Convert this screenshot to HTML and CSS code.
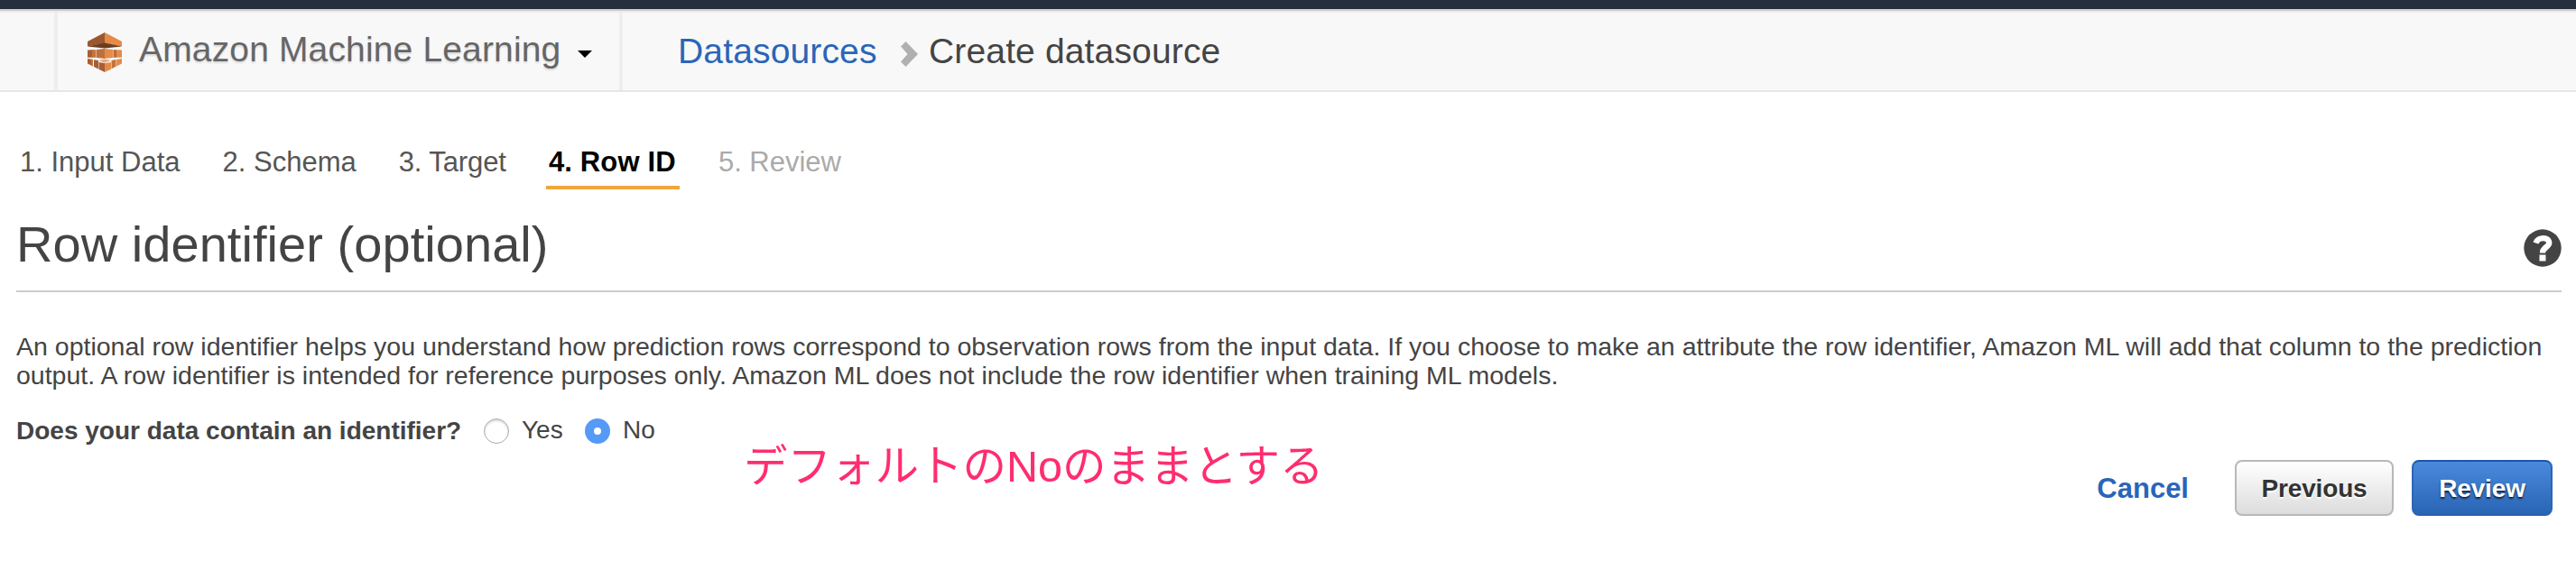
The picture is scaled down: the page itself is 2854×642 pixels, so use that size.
FILE: index.html
```html
<!DOCTYPE html>
<html lang="en">
<head>
<meta charset="utf-8">
<title>Create datasource</title>
<link rel="stylesheet" href="styles.css">
</head>
<body>
<div class="topbar"></div>
<header class="header">
  <div class="service">
    <svg class="logo" width="38" height="44" viewBox="0 0 38 44">
      <path fill="#9b5730" d="M0 10 19 0v12L0 15.500z"/>
      <path fill="#e58b4a" d="M38 10 19 0v12l19 3.500z"/>
      <path fill="#6b3d20" d="M0 15.500 19 11.500l19 4L19 17.500z"/>
      <path fill="#a55f34" d="M0 19.500l6-.3v8.600H0z"/>
      <path fill="#c4733f" d="M5 19.200h4.500v8.600H5z"/>
      <path fill="#c06f3c" d="M10 19l9-1v11l-9-1z"/>
      <path fill="#e58b4a" d="M19 18l9 1v9l-9 1zM32 19.200l6 .3v8.300h-6z"/>
      <path fill="#b56b3c" d="M28.500 19.200h3.500v8.600h-3.500z"/>
      <path fill="#a55f34" d="M0 29l6 1v7.500L0 34.500zM7 30.300l5 .7v9.500l-5-2.500zM12.500 33 19 34v10l-6.500-3.200z"/>
      <path fill="#e58b4a" d="M19 34l7-1v7.800L19 44zM32 30l6-1v5.500L32 37.500z"/>
      <path fill="#c4733f" d="M4 29.700l2 .3v7.500l-2-1zM26.500 31l5-1v7.700l-5 2.600z"/>
      <path fill="#e9a77a" d="M12 31l7-1.500 7 1.500-7 2.500z"/>
    </svg>
    <span class="service-name">Amazon Machine Learning</span>
    <span class="caret"></span>
  </div>
  <nav class="crumbs">
    <a class="crumb-link">Datasources</a>
    <svg class="chevron" width="20" height="28" viewBox="0 0 20 28"><path fill="#b0b0b0" d="M0 5.500 5.500 0 19 14 5.500 28 0 22.500 7.500 14z"/></svg>
    <span class="crumb-current">Create datasource</span>
  </nav>
</header>
<main class="page">
  <ol class="steps">
    <li class="step">1. Input Data</li>
    <li class="step">2. Schema</li>
    <li class="step step-target">3. Target</li>
    <li class="step step-active">4. Row ID</li>
    <li class="step step-disabled">5. Review</li>
  </ol>
  <div class="title-row">
    <h1 class="title">Row identifier (optional)</h1>
    <svg class="help" width="42" height="42" viewBox="0 0 42 42">
      <circle cx="21" cy="21" r="20.700" fill="#444"/>
      <path d="M13.500 15.500C16 8 28.500 8.500 28.200 15.700 28 20 21 20 21 26.500" fill="none" stroke="#fff" stroke-width="6.400"/>
      <path fill="#fff" d="M17.500 28.500h7v7h-7z"/>
    </svg>
  </div>
  <p class="intro">An optional row identifier helps you understand how prediction rows correspond to observation rows from the input data. If you choose to make an attribute the row identifier, Amazon ML will add that column to the prediction<br>output. A row identifier is intended for reference purposes only. Amazon ML does not include the row identifier when training ML models.</p>
  <div class="question">
    <span class="question-label">Does your data contain an identifier?</span>
    <span class="radio"></span><span class="option option-yes">Yes</span>
    <span class="radio radio-on"></span><span class="option">No</span>
  </div>
  <div class="actions">
    <a class="cancel">Cancel</a>
    <span class="button">Previous</span>
    <span class="button button-primary">Review</span>
  </div>
  <div class="note" lang="ja">デフォルトのNoのままとする</div>
</main>
</body>
</html>
```
FILE: styles.css
```css
* { box-sizing: border-box; }
body {
  margin: 0;
  background: #fff;
  color: #444;
  font-family: "Liberation Sans", Arial, sans-serif;
  height: 642px;
  overflow: hidden;
}
.topbar { height: 10px; background: #262f3e; }
.header {
  display: flex;
  height: 92px;
  padding-left: 60px;
  background: #f8f8f8;
  border-top: 2px solid #ccc;
  border-bottom: 2px solid #e6e6e6;
  box-shadow: inset 0 2px 0 #ececec;
  font-size: 39px;
  letter-spacing: .15px;
  white-space: nowrap;
}
.service {
  display: flex;
  width: 630px;
  margin-top: 2px;
  padding-left: 33px;
  border-left: 4px solid #eee;
  border-right: 4px solid #eee;
}
.logo { margin-top: 22px; flex: none; }
.service-name {
  width: 505px;
  padding-left: 19px;
  line-height: 81px;
  color: #666;
  text-shadow: 0 2px 2px rgba(0, 0, 0, .12);
}
.caret {
  margin-top: 42px;
  width: 0;
  height: 0;
  border: 8px solid transparent;
  border-top-color: #000;
  border-bottom: 0;
}
.crumbs { display: flex; padding-left: 61px; line-height: 89px; }
.crumb-link { width: 247px; color: #2a65b8; }
.chevron { margin-top: 34px; flex: none; }
.crumb-current { padding-left: 11px; }
.page { position: relative; padding: 59px 16px 0 18px; }
.steps {
  display: flex;
  margin: 0;
  padding: 1px 0 0 4px;
  list-style: none;
  font-size: 31px;
  line-height: 36px;
  color: #555;
  white-space: nowrap;
}
.step { margin-right: 47px; padding-bottom: 8px; border-bottom: 4px solid transparent; }
.step-target { margin-right: 44px; letter-spacing: -.1px; }
.step-active {
  margin-right: 43px;
  width: 148px;
  padding-left: 3px;
  font-weight: bold;
  letter-spacing: .15px;
  color: #000;
  border-bottom-color: #f0a63c;
}
.step-disabled { color: #aaa; }
.title-row {
  display: flex;
  justify-content: space-between;
  margin-top: 29px;
  padding-bottom: 19px;
  border-bottom: 2px solid #ccc;
}
.title { margin: 0; font-size: 56px; font-weight: normal; letter-spacing: .05px; line-height: 64px; }
.help { margin-top: 15px; }
.intro { margin: 44px 0 0; font-size: 28.500px; line-height: 32px; white-space: nowrap; }
.question { display: flex; align-items: center; height: 32px; margin-top: 30px; font-size: 28px; line-height: 32px; }
.question-label { width: 518px; font-weight: bold; white-space: nowrap; }
.radio {
  width: 28px;
  height: 28px;
  margin-right: 14px;
  border: 1px solid #aaa;
  border-radius: 50%;
  background: #fff;
  box-shadow: inset 0 2px 2px rgba(0, 0, 0, .15);
}
.radio-on { border: 10px solid #559af7; box-shadow: none; }
.option { margin-top: -3px; }
.option-yes { width: 70px; }
.actions {
  display: flex;
  justify-content: flex-end;
  margin-top: 16px;
  padding-right: 10px;
  font-weight: bold;
  line-height: 62px;
}
.cancel { margin-right: 51px; font-size: 31px; line-height: 64px; height: 62px; color: #2a65b8; }
.button {
  width: 176px;
  height: 62px;
  border: 2px solid #b8b8b8;
  border-radius: 8px;
  background: linear-gradient(#fff, #dcdcdc);
  color: #333;
  font-size: 28px;
  letter-spacing: -.15px;
  line-height: 60px;
  text-align: center;
  text-shadow: 0 2px 2px #fff;
}
.button-primary {
  width: 156px;
  margin-left: 20px;
  border-color: #1c56a8 #2c66b4 #2a62b0;
  background: linear-gradient(#4a89dc, #2a65b5);
  color: #fff;
  text-shadow: 0 2px 2px rgba(0, 0, 0, .7);
}
/* Annotation floating over the form */
.note {
  position: absolute;
  left: 824px;
  top: 380px;
  color: #ff2d6f;
  font-family: "Liberation Sans", "Noto Sans CJK JP", sans-serif;
  font-size: 48.500px;
  font-weight: 400;
  line-height: 70px;
  white-space: nowrap;
}
```
